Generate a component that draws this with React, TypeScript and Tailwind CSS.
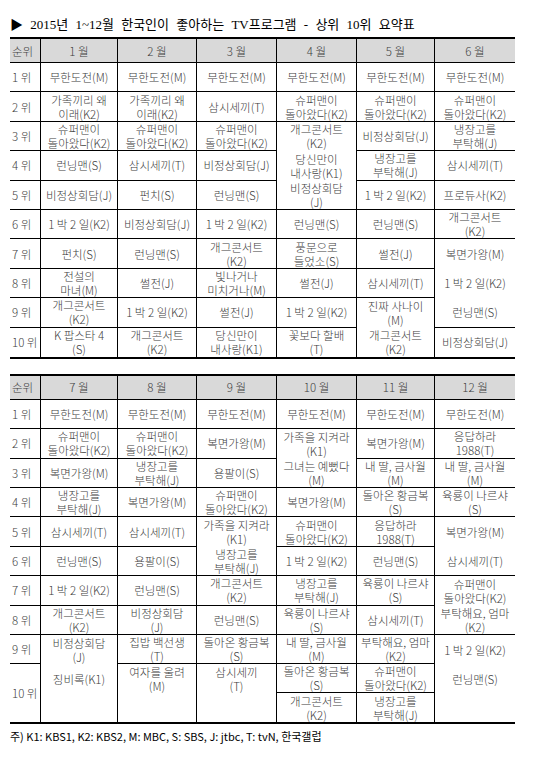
type Cell = string | { t: string; open: true };

const o = (t: string): Cell => ({ t, open: true });

const widths = ["w-[77px]", "w-[79px]", "w-[80px]", "w-[80px]", "w-[78px]", "w-[80px]"];

const firstHalf: { head: string; cells: Cell[] }[] = [
    { head: "1 월", cells: ["무한도전(M)", "가족끼리 왜\n이래(K2)", "슈퍼맨이\n돌아왔다(K2)", "런닝맨(S)", "비정상회담(J)", "1 박 2 일(K2)", "펀치(S)", "전설의\n마녀(M)", "개그콘서트\n(K2)", "K 팝스타 4\n(S)"] },
    { head: "2 월", cells: ["무한도전(M)", "가족끼리 왜\n이래(K2)", "슈퍼맨이\n돌아왔다(K2)", "삼시세끼(T)", "펀치(S)", "비정상회담(J)", "런닝맨(S)", "썰전(J)", "1 박 2 일(K2)", "개그콘서트\n(K2)"] },
    { head: "3 월", cells: ["무한도전(M)", "삼시세끼(T)", "슈퍼맨이\n돌아왔다(K2)", "비정상회담(J)", "런닝맨(S)", "1 박 2 일(K2)", "개그콘서트\n(K2)", "빛나거나\n미치거나(M)", "썰전(J)", "당신만이\n내사랑(K1)"] },
    { head: "4 월", cells: ["무한도전(M)", "슈퍼맨이\n돌아왔다(K2)", o("개그콘서트\n(K2)"), o("당신만이\n내사랑(K1)"), "비정상회담\n(J)", "런닝맨(S)", "풍문으로\n들었소(S)", "썰전(J)", "1 박 2 일(K2)", "꽃보다 할배\n(T)"] },
    { head: "5 월", cells: ["무한도전(M)", "슈퍼맨이\n돌아왔다(K2)", "비정상회담(J)", "냉장고를\n부탁해(J)", "1 박 2 일(K2)", "런닝맨(S)", "썰전(J)", "삼시세끼(T)", o("진짜 사나이\n(M)"), "개그콘서트\n(K2)"] },
    { head: "6 월", cells: ["무한도전(M)", "슈퍼맨이\n돌아왔다(K2)", "냉장고를\n부탁해(J)", "삼시세끼(T)", "프로듀사(K2)", "개그콘서트\n(K2)", o("복면가왕(M)"), o("1 박 2 일(K2)"), "런닝맨(S)", "비정상회담(J)"] },
];

const secondHalf: { head: string; cells: Cell[] }[] = [
    { head: "7 월", cells: ["무한도전(M)", "슈퍼맨이\n돌아왔다(K2)", "복면가왕(M)", "냉장고를\n부탁해(J)", "삼시세끼(T)", "런닝맨(S)", "1 박 2 일(K2)", "개그콘서트\n(K2)", o("비정상회담\n(J)"), o("징비록(K1)"), ""] },
    { head: "8 월", cells: ["무한도전(M)", "슈퍼맨이\n돌아왔다(K2)", "냉장고를\n부탁해(J)", "복면가왕(M)", "삼시세끼(T)", "용팔이(S)", "런닝맨(S)", "비정상회담\n(J)", "집밥 백선생\n(T)", o("여자를 울려\n(M)"), ""] },
    { head: "9 월", cells: ["무한도전(M)", "복면가왕(M)", "용팔이(S)", "슈퍼맨이\n돌아왔다(K2)", o("가족을 지켜라\n(K1)"), "냉장고를\n부탁해(J)", "개그콘서트\n(K2)", "런닝맨(S)", "돌아온 황금복\n(S)", o("삼시세끼\n(T)"), ""] },
    { head: "10 월", cells: ["무한도전(M)", o("가족을 지켜라\n(K1)"), "그녀는 예뻤다\n(M)", "복면가왕(M)", "슈퍼맨이\n돌아왔다(K2)", "1 박 2 일(K2)", "냉장고를\n부탁해(J)", "육룡이 나르샤\n(S)", "내 딸, 금사월\n(M)", "돌아온 황금복\n(S)", "개그콘서트\n(K2)"] },
    { head: "11 월", cells: ["무한도전(M)", "복면가왕(M)", "내 딸, 금사월\n(M)", "돌아온 황금복\n(S)", "응답하라\n1988(T)", "런닝맨(S)", "육룡이 나르샤\n(S)", "삼시세끼(T)", "부탁해요, 엄마\n(K2)", "슈퍼맨이\n돌아왔다(K2)", "냉장고를\n부탁해(J)"] },
    { head: "12 월", cells: ["무한도전(M)", "응답하라\n1988(T)", "내 딸, 금사월\n(M)", "육룡이 나르샤\n(S)", o("복면가왕(M)"), "삼시세끼(T)", o("슈퍼맨이\n돌아왔다(K2)"), "부탁해요, 엄마\n(K2)", o("1 박 2 일(K2)"), o("런닝맨(S)"), ""] },
];

function Lines({ text }: { text: string }) {
    return (
        <>
            {text.split("\n").map((l, i) => (
                <span key={i} className="whitespace-nowrap">{l}</span>
            ))}
        </>
    );
}

function RankTable({ cols, tall }: { cols: { head: string; cells: Cell[] }[]; tall: boolean }) {
    const ranks = ["1 위", "2 위", "3 위", "4 위", "5 위", "6 위", "7 위", "8 위", "9 위", "10 위"];
    const rowH = (i: number) => (tall && i >= 9 ? "h-[29px]" : "h-[29.4px]");
    return (
        <div className="ml-[10px] flex w-[505px] border-y-2 border-black text-[11.5px] leading-[14px] font-light text-[#404040]">
            <div className="flex w-[31px] flex-col border-r border-black">
                <div className="flex h-[24px] items-center border-b border-black bg-[#d9d9d9] pl-[2px]">순위</div>
                {ranks.map((r, i) => (
                    <div key={r} className={`flex items-center pl-[2px] ${i === 9 ? (tall ? "h-[58px]" : "h-[29.4px]") : "h-[29.4px] border-b border-black"}`}>{r}</div>
                ))}
            </div>
            {cols.map((c, ci) => (
                <div key={c.head} className={`flex flex-col ${widths[ci]} ${ci < cols.length - 1 ? "border-r border-black" : ""}`}>
                    <div className="flex h-[24px] items-center justify-center border-b border-black bg-[#d9d9d9]">{c.head}</div>
                    {c.cells.map((cell, i) => {
                        const t = typeof cell === "string" ? cell : cell.t;
                        const open = typeof cell !== "string" || i === c.cells.length - 1;
                        return (
                            <div key={i} className={`flex flex-col items-center justify-center text-center ${rowH(i)} ${open ? "" : "border-b border-black"}`}>
                                <Lines text={t} />
                            </div>
                        );
                    })}
                </div>
            ))}
        </div>
    );
}

export default function App() {
    return (
        <div className="h-[760px] w-[554px] bg-white font-['Noto_Sans_CJK_KR',sans-serif]">
            <div className="pl-[10px] pt-[17px] pb-[4px] font-['Liberation_Serif','Noto_Sans_CJK_KR',serif] text-[13px] leading-[16px] text-black [word-spacing:4px]">
                ▶ 2015년 1~12월 한국인이 좋아하는 TV프로그램 - 상위 10위 요약표
            </div>
            <RankTable cols={firstHalf} tall={false} />
            <div className="h-[15px]" />
            <RankTable cols={secondHalf} tall={true} />
            <div className="pl-[10px] pt-[5px] text-[11px] leading-[14px] text-black">
                주) K1: KBS1, K2: KBS2, M: MBC, S: SBS, J: jtbc, T: tvN, 한국갤럽
            </div>
        </div>
    );
}
